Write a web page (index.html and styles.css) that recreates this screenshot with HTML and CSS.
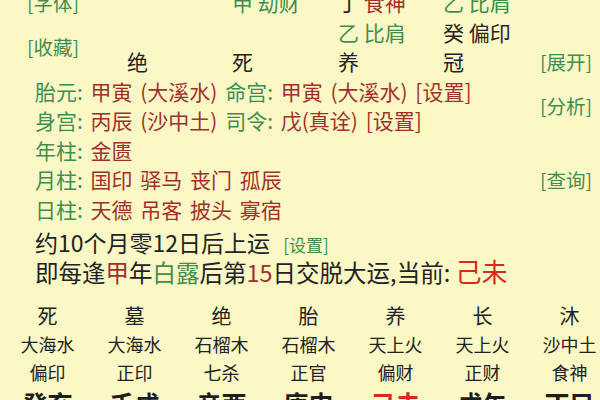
FILE: index.html
```html
<!DOCTYPE html>
<html lang="zh">
<head>
<meta charset="utf-8">
<link rel="stylesheet" href="styles.css">
</head>
<body>
<div class="page">
  <div class="board">
    <span class="link c1 r1">[字体]</span>
    <span class="cell c3 r1 g">甲 劫财</span>
    <span class="cell c4 r1"><span class="dk">丁</span> <span class="rd">食神</span></span>
    <span class="cell c5 r1 g">乙 比肩</span>

    <span class="link c1 r23">[收藏]</span>
    <span class="cell c4 r2 g">乙 比肩</span>
    <span class="cell c5 r2 dk">癸 偏印</span>

    <span class="cell c2 r3">绝</span>
    <span class="cell c3 r3">死</span>
    <span class="cell c4 r3">养</span>
    <span class="cell c5 r3">冠</span>
    <span class="link c6 r3">[展开]</span>

    <div class="info r4"><span class="g">胎元:</span> <span class="rd">甲寅 (大溪水)</span> <span class="g">命宫:</span> <span class="rd">甲寅 (大溪水) [设置]</span></div>
    <div class="info r5"><span class="g">身宫:</span> <span class="rd">丙辰 (沙中土)</span> <span class="g">司令:</span> <span class="rd">戊(真诠) [设置]</span></div>
    <span class="link c6 r45">[分析]</span>
    <div class="info r6"><span class="g">年柱:</span> <span class="rd">金匮</span></div>
    <div class="info r7"><span class="g">月柱:</span> <span class="rd">国印 驿马 丧门 孤辰</span></div>
    <span class="link c6 r7">[查询]</span>
    <div class="info r8"><span class="g">日柱:</span> <span class="rd">天德 吊客 披头 寡宿</span></div>
  </div>

  <div class="yun">约10个月零12日后上运 <span class="small-link">[设置]</span></div>
  <div class="jiao">即每逢<span class="rd">甲</span>年<span class="g">白露</span>后第<span class="rd">15</span>日交脱大运,当前: <span class="cur">己未</span></div>

  <div class="dayun">
    <span class="st">死</span><span class="st">墓</span><span class="st">绝</span><span class="st">胎</span><span class="st">养</span><span class="st">长</span><span class="st">沐</span>
    <span class="ny">大海水</span><span class="ny">大海水</span><span class="ny">石榴木</span><span class="ny">石榴木</span><span class="ny">天上火</span><span class="ny">天上火</span><span class="ny">沙中土</span>
    <span class="ss">偏印</span><span class="ss">正印</span><span class="ss">七杀</span><span class="ss">正官</span><span class="ss">偏财</span><span class="ss">正财</span><span class="ss">食神</span>
    <span class="gz">癸亥</span><span class="gz">壬戌</span><span class="gz">辛酉</span><span class="gz">庚申</span><span class="gz now">己未</span><span class="gz">戊午</span><span class="gz">丁巳</span>
  </div>
</div>
</body>
</html>
```

FILE: styles.css
```css
html, body {
  margin: 0;
  padding: 0;
}
body {
  background: #fbf8c6;
  color: #222;
  font-family: "Noto Sans CJK SC", "Noto Sans", sans-serif;
  overflow: hidden;
  width: 600px;
  height: 400px;
}
.page {
  width: 600px;
}
.g { color: #3f8e4f; }
.rd { color: #a2302a; }
.dk { color: #2a2520; }

.board {
  display: grid;
  grid-template-columns: 100px 105px 106px 105px 97px 67px;
  grid-auto-rows: 29.5px;
  margin-top: -12px;
  padding-left: 27px;
  align-items: center;
  font-size: 21px;
  line-height: 29.5px;
  white-space: nowrap;
}
.link {
  color: #3f8e4f;
  font-size: 19.5px;
}
.c1 { grid-column: 1; }
.c2 { grid-column: 2; }
.c3 { grid-column: 3; }
.c4 { grid-column: 4; }
.c5 { grid-column: 5; }
.c6 { grid-column: 6; }
.r1 { grid-row: 1; }
.r2 { grid-row: 2; }
.r3 { grid-row: 3; }
.r23 { grid-row: 2 / span 2; }
.r4 { grid-row: 4; }
.r5 { grid-row: 5; }
.r45 { grid-row: 4 / span 2; }
.r6 { grid-row: 6; }
.r7 { grid-row: 7; }
.r8 { grid-row: 8; }
.info {
  grid-column: 1 / span 5;
  padding-left: 8px;
  word-spacing: 3px;
}

.yun {
  margin-top: 3px;
  height: 30px;
  line-height: 30px;
  padding-left: 35px;
  font-size: 23px;
  white-space: nowrap;
}
.small-link {
  color: #3f8e4f;
  font-size: 17px;
  margin-left: 8px;
}
.jiao {
  height: 28px;
  line-height: 28px;
  padding-left: 35px;
  font-size: 23.5px;
  white-space: nowrap;
}
.cur {
  color: #d42a20;
  font-size: 26px;
}

.dayun {
  margin-top: 17px;
  padding-left: 4px;
  display: grid;
  grid-template-columns: repeat(7, 87px);
  grid-auto-rows: 28px;
  align-items: center;
  text-align: center;
  line-height: 28px;
  white-space: nowrap;
}
.st { font-size: 20px; }
.ny { font-size: 18px; }
.ss { font-size: 18px; }
.gz {
  font-size: 25px;
  font-weight: bold;
  color: #1e1e1e;
  padding-top: 5px;
}
.gz.now { color: #d42a20; }
```
